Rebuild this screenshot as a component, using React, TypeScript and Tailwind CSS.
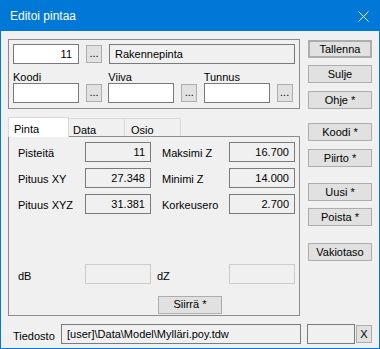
const font = { fontFamily: '"Liberation Sans", Arial, sans-serif' };

const Btn = ({ label, className = "" }: { label: string; className?: string }) => (
  <button
    className={`h-[18px] w-[64px] border border-[#adadad] bg-[#e1e1e1] text-[11px] leading-none text-black ${className}`}
  >
    {label}
  </button>
);

const Dots = () => (
  <button className="flex h-[18px] w-[16px] shrink-0 items-end justify-center border border-[#adadad] bg-[#e1e1e1] pb-[3px] text-[11px] leading-none">
    ...
  </button>
);

const Field = ({ value, className = "" }: { value?: string; className?: string }) => (
  <div
    className={`flex h-[20px] w-[66px] shrink-0 items-center justify-end border border-[#7a7a7a] bg-[#f0f0f0] pr-[5px] text-[11px] ${className}`}
  >
    {value}
  </div>
);

const StatRow = ({ l1, v1, l2, v2 }: { l1: string; v1: string; l2: string; v2: string }) => (
  <div className="flex h-[20px] items-center">
    <span className="w-[67px] pt-[2px] text-[11px]">{l1}</span>
    <Field value={v1} />
    <span className="ml-[11px] w-[67px] pt-[2px] text-[11px]">{l2}</span>
    <Field value={v2} />
  </div>
);

const App = () => {
  const codes = [
    { label: "Koodi", x: "" },
    { label: "Viiva", x: "" },
    { label: "Tunnus", x: "" },
  ];
  return (
    <div style={font} className="flex h-[349px] w-[380px] flex-col border border-[#0078d7] bg-[#f0f0f0] text-black">
      <div className="flex h-[30px] shrink-0 items-center justify-between bg-[#0078d7] pl-[9px] pr-[9px] text-white">
        <span className="text-[12px]">Editoi pintaa</span>
        <svg width="11" height="11" viewBox="0 0 11 11" className="mr-[1px]">
          <path d="M0.5 0.5L10.5 10.5M10.5 0.5L0.5 10.5" stroke="white" strokeWidth="1" />
        </svg>
      </div>

      <div className="flex flex-1 flex-col pl-[7px] pt-[8px]">
        <div className="flex">
          <div className="flex w-[292px] flex-col">
            {/* yläosan ryhmä */}
            <div className="h-[70px] border border-[#8c8c8c] pl-[4px] pt-[4px]">
              <div className="flex h-[20px] items-center gap-[7px]">
                <div className="flex h-[20px] w-[66px] items-center justify-end border border-[#7a7a7a] bg-white pr-[6px] text-[11px]">
                  11
                </div>
                <Dots />
                <div className="flex h-[20px] w-[186px] items-center border border-[#7a7a7a] bg-[#f0f0f0] pl-[5px] text-[11px]">
                  Rakennepinta
                </div>
              </div>
              <div className="mt-[7px] flex">
                {codes.map((c) => (
                  <div key={c.label} className="flex w-[96px] flex-col">
                    <span className="h-[12px] text-[11px] leading-[12px]">{c.label}</span>
                    <div className="flex h-[20px] items-center gap-[7px]">
                      <div className="h-[20px] w-[66px] border border-[#7a7a7a] bg-white" />
                      <Dots />
                    </div>
                  </div>
                ))}
              </div>
            </div>

            {/* välilehdet */}
            <div className="mt-[8px] flex h-[19px] items-end text-[11px]">
              <div className="relative z-10 h-[20px] w-[61px] translate-y-[1px] border-l border-r border-t border-[#d9d9d9] bg-white pl-[5px] pt-[3px]">
                Pinta
              </div>
              <div className="h-[18px] w-[56px] border-r border-t border-[#d9d9d9] pl-[4px] pt-[3px]">Data</div>
              <div className="h-[18px] w-[56px] border-r border-t border-[#d9d9d9] pl-[6px] pt-[3px]">Osio</div>
            </div>
            <div className="flex h-[180px] flex-col border border-[#8c8c8c] pl-[9px] pt-[5px]">
              <div className="flex flex-col gap-[6px]">
                <StatRow l1="Pisteitä" v1="11" l2="Maksimi Z" v2="16.700" />
                <StatRow l1="Pituus XY" v1="27.348" l2="Minimi Z" v2="14.000" />
                <StatRow l1="Pituus XYZ" v1="31.381" l2="Korkeusero" v2="2.700" />
              </div>
              <div className="mt-[50px] flex h-[20px] items-center">
                <span className="w-[67px] pt-[4px] text-[11px]">dB</span>
                <div className="h-[20px] w-[66px] border border-[#cccccc]" />
                <span className="ml-[6px] w-[72px] pt-[4px] text-[11px]">dZ</span>
                <div className="h-[20px] w-[66px] border border-[#cccccc]" />
              </div>
              <div className="ml-[140px] mt-[7px]">
                <Btn label="Siirrä *" />
              </div>
            </div>
          </div>

          {/* oikean reunan napit */}
          <div className="ml-[8px] flex flex-col pt-[1px]">
            <Btn label="Tallenna" className="border-2 border-[#0078d7]" />
            <Btn label="Sulje" className="mt-[7px]" />
            <Btn label="Ohje *" className="mt-[8px]" />
            <Btn label="Koodi *" className="mt-[14px]" />
            <Btn label="Piirto *" className="mt-[8px]" />
            <Btn label="Uusi *" className="mt-[16px]" />
            <Btn label="Poista *" className="mt-[7px]" />
            <Btn label="Vakiotaso" className="mt-[17px]" />
          </div>
        </div>

        <div className="mt-[8px] flex h-[20px] items-center">
          <span className="w-[53px] pl-[5px] pt-[5px] text-[11px]">Tiedosto</span>
          <div className="flex h-[20px] w-[240px] items-center border border-[#7a7a7a] pl-[5px] text-[11px]">
            [user]\Data\Model\Mylläri.poy.tdw
          </div>
          <div className="ml-[6px] h-[20px] w-[48px] border border-[#7a7a7a]" />
          <button className="ml-[1px] h-[18px] w-[16px] border border-[#adadad] bg-[#e1e1e1] text-[11px] leading-none">
            X
          </button>
        </div>
      </div>
    </div>
  );
};

export default App;
